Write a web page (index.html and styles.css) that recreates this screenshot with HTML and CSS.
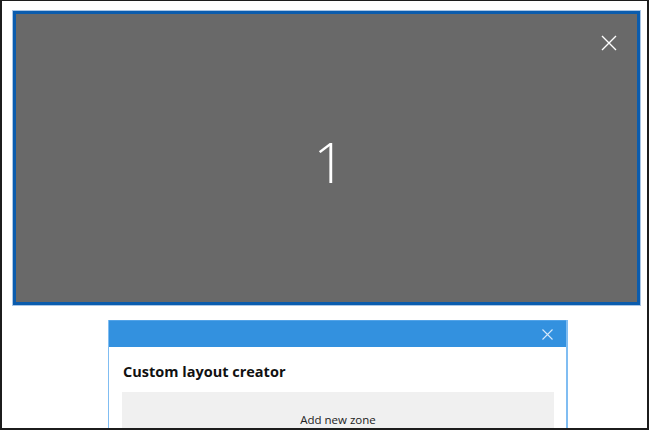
FILE: index.html
```html
<!DOCTYPE html>
<html lang="en">
<head>
<meta charset="utf-8">
<title>Custom layout creator</title>
<link rel="stylesheet" href="styles.css">
</head>
<body>
<div class="screen">
  <div class="zone">
    <button class="zone-close" aria-label="Close zone">
      <svg width="16" height="16" viewBox="0 0 16 16"><path d="M1 1 L15 15 M15 1 L1 15" stroke="#ffffff" stroke-width="1.4" fill="none"/></svg>
    </button>
    <span class="zone-number">1</span>
  </div>
  <div class="dialog">
    <div class="dialog-header">
      <button class="dialog-close" aria-label="Close">
        <svg width="11" height="11" viewBox="0 0 11 11"><path d="M0.5 0.5 L10.5 10.5 M10.5 0.5 L0.5 10.5" stroke="#d6e9fb" stroke-width="1.1" fill="none"/></svg>
      </button>
    </div>
    <div class="dialog-body">
      <h1 class="dialog-title">Custom layout creator</h1>
      <div class="add-zone">Add new zone</div>
    </div>
  </div>
</div>
</body>
</html>
```

FILE: styles.css
```css
* { box-sizing: border-box; }
html, body { margin: 0; padding: 0; background: #ffffff; }
body { font-family: "Open Sans", "Liberation Sans", sans-serif; }

.screen {
  width: 649px;
  height: 430px;
  overflow: hidden;
  border-style: solid;
  border-color: #1c1c1c;
  border-width: 1px 2px 2px 2px;
  background: #ffffff;
}

.zone {
  position: relative;
  margin: 10px 0 0 11px;
  width: 627px;
  height: 294px;
  background: #696969;
  border: 3px solid #0b5cad;
  outline: 1px solid #a9c6e6;
  display: flex;
  align-items: center;
  justify-content: center;
}

.zone-number {
  color: #ffffff;
  font-family: "Open Sans", sans-serif;
  font-weight: 300;
  font-size: 56px;
  line-height: 1;
  margin-top: 6px;
  margin-left: 6px;
}

.zone-close {
  position: absolute;
  top: 21px;
  right: 20px;
  width: 16px;
  height: 16px;
  padding: 0;
  border: 0;
  background: none;
  display: flex;
}

.dialog {
  margin: 15px 0 0 106px;
  width: 460px;
  height: 120px;
  border-left: 1px solid #80bdf2;
  border-right: 2px solid #80bdf2;
  background: #ffffff;
}

.dialog-header {
  height: 27px;
  background: #3391df;
  border-top: 1px solid #52a3e8;
  display: flex;
  justify-content: flex-end;
  align-items: center;
}

.dialog-close {
  width: 11px;
  height: 11px;
  padding: 0;
  border: 0;
  background: none;
  display: flex;
  margin-right: 13px;
  margin-top: 1px;
}

.dialog-body {
  padding: 0 12px 0 13px;
}

.dialog-title {
  margin: 0;
  padding: 14px 0 0 1px;
  font-family: "Open Sans", sans-serif;
  font-weight: 700;
  font-size: 14.5px;
  line-height: 22px;
  color: #111111;
}

.add-zone {
  margin-top: 9px;
  height: 40px;
  background: #f0f0f0;
  color: #222222;
  font-family: "Open Sans", sans-serif;
  font-size: 11.5px;
  text-align: center;
  padding-top: 19px;
  line-height: 17px;
}
```
